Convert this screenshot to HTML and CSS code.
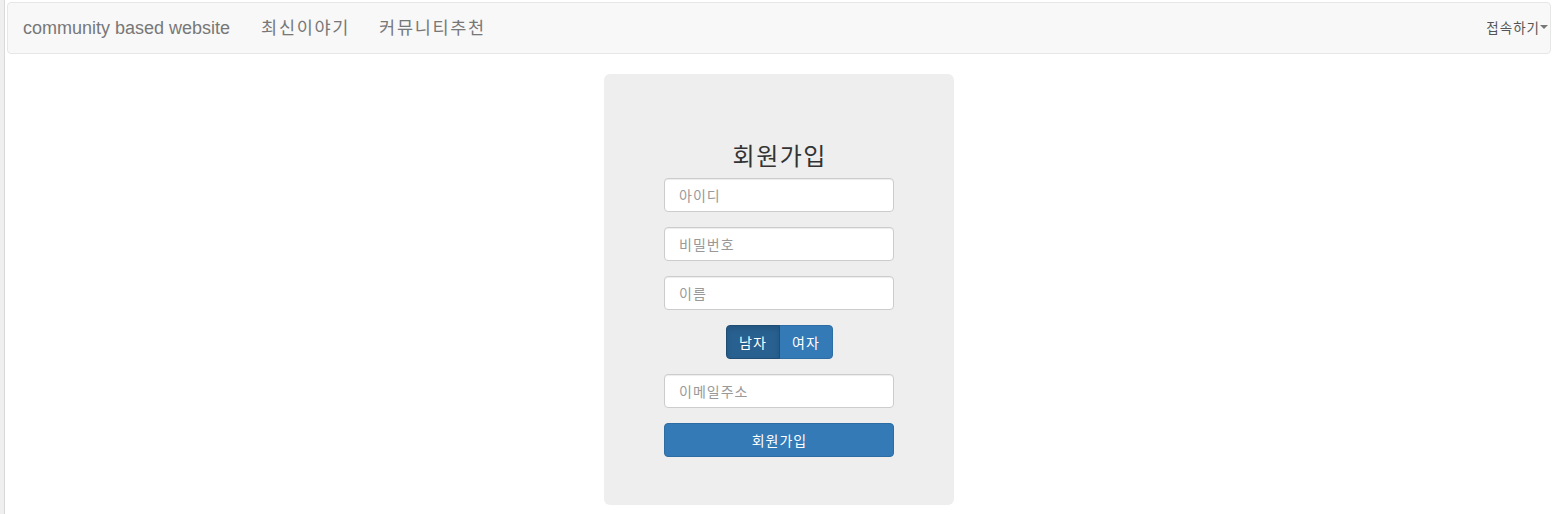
FILE: index.html
```html
<!DOCTYPE html>
<html lang="ko">
<head>
<meta charset="utf-8">
<title>community based website</title>
<link rel="stylesheet" href="styles.css">
</head>
<body>
<div class="gutter"></div>
<div class="page">
  <nav class="navbar">
    <div class="nav-left">
      <a class="brand" href="#">community based website</a>
      <a class="nav-link" href="#">최신이야기</a>
      <a class="nav-link" href="#">커뮤니티추천</a>
    </div>
    <a class="dropdown" href="#">접속하기<span class="caret"></span></a>
  </nav>
  <div class="container">
    <form class="jumbotron">
      <h3 class="title">회원가입</h3>
      <input class="field" type="text" placeholder="아이디">
      <input class="field" type="password" placeholder="비밀번호">
      <input class="field" type="text" placeholder="이름">
      <div class="btn-group">
        <button type="button" class="btn btn-toggle active">남자</button>
        <button type="button" class="btn btn-toggle">여자</button>
      </div>
      <input class="field" type="email" placeholder="이메일주소">
      <button type="button" class="btn btn-submit">회원가입</button>
    </form>
  </div>
</div>
</body>
</html>
```
FILE: styles.css
```css
* { box-sizing: border-box; }
html, body { margin: 0; height: 100%; }
body {
  display: flex;
  background: #fff;
  font-family: "Liberation Sans", "Noto Sans CJK KR", Arial, sans-serif;
  font-size: 14px;
  color: #333;
  overflow: hidden;
}
.gutter {
  width: 5px;
  flex: 0 0 5px;
  background: #efefef;
  border-right: 1px solid #d9d9d9;
}
.page { flex: 1; min-width: 0; }
.navbar {
  margin: 2px 1px 20px 2px;
  height: 52px;
  background: #f8f8f8;
  border: 1px solid #e7e7e7;
  border-radius: 4px;
  display: flex;
  align-items: center;
  justify-content: space-between;
}
.nav-left { display: flex; align-items: center; }
.brand, .nav-link {
  color: #777;
  text-decoration: none;
  font-size: 18px;
  line-height: 20px;
  padding: 15px;
}
.brand { padding-right: 16px; }
.nav-link {
  font-family: "Noto Sans CJK KR", sans-serif;
  font-size: 17.5px;
  letter-spacing: 1.7px;
  padding: 14px 14px 16px 15px;
}
.dropdown {
  color: #555;
  text-decoration: none;
  font-family: "Noto Sans CJK KR", sans-serif;
  font-size: 13.5px;
  letter-spacing: 1px;
  padding: 14px 2px 16px 0;
  display: flex;
  align-items: center;
}
.caret {
  display: inline-block;
  width: 0; height: 0;
  margin-left: 0;
  border-top: 4px solid #777;
  border-left: 4px solid transparent;
  border-right: 4px solid transparent;
}
.container { display: flex; justify-content: center; padding-left: 1px; }
.jumbotron {
  width: 350px;
  height: 431px;
  background: #eee;
  border-radius: 6px;
  padding: 68px 60px 0;
  display: flex;
  flex-direction: column;
  align-items: center;
  margin: 0;
}
.title {
  margin: 0 0 10px;
  font-family: "Noto Sans CJK KR", sans-serif;
  font-weight: 400;
  font-size: 24px;
  line-height: 26px;
  letter-spacing: 1.5px;
  padding-left: 1.5px;
  color: #333;
}
.field {
  width: 230px;
  height: 34px;
  margin: 0 0 15px;
  padding: 6px 12px 6px 14px;
  border: 1px solid #ccc;
  border-radius: 4px;
  background: #fff;
  font-family: "Noto Sans CJK KR", sans-serif;
  font-size: 14px;
  letter-spacing: 1px;
  color: #555;
  box-shadow: inset 0 1px 1px rgba(0,0,0,.075);
  outline: none;
}
.field::placeholder { color: #999; }
.btn-group { display: flex; margin-bottom: 15px; }
.btn {
  height: 34px;
  font-family: "Noto Sans CJK KR", sans-serif;
  font-size: 14px;
  letter-spacing: 1px;
  color: #fff;
  background: #337ab7;
  border: 1px solid #2e6da4;
  cursor: pointer;
  padding: 0 0 0 1px;
}
.btn-toggle { width: 54px; }
.btn-toggle:first-child { border-radius: 4px 0 0 4px; }
.btn-toggle:last-child { border-radius: 0 4px 4px 0; margin-left: -1px; }
.btn-toggle.active {
  background: #286090;
  border-color: #204d74;
  box-shadow: inset 0 3px 5px rgba(0,0,0,.125);
  position: relative;
  z-index: 1;
}
.btn-submit { width: 230px; border-radius: 4px; }
```
